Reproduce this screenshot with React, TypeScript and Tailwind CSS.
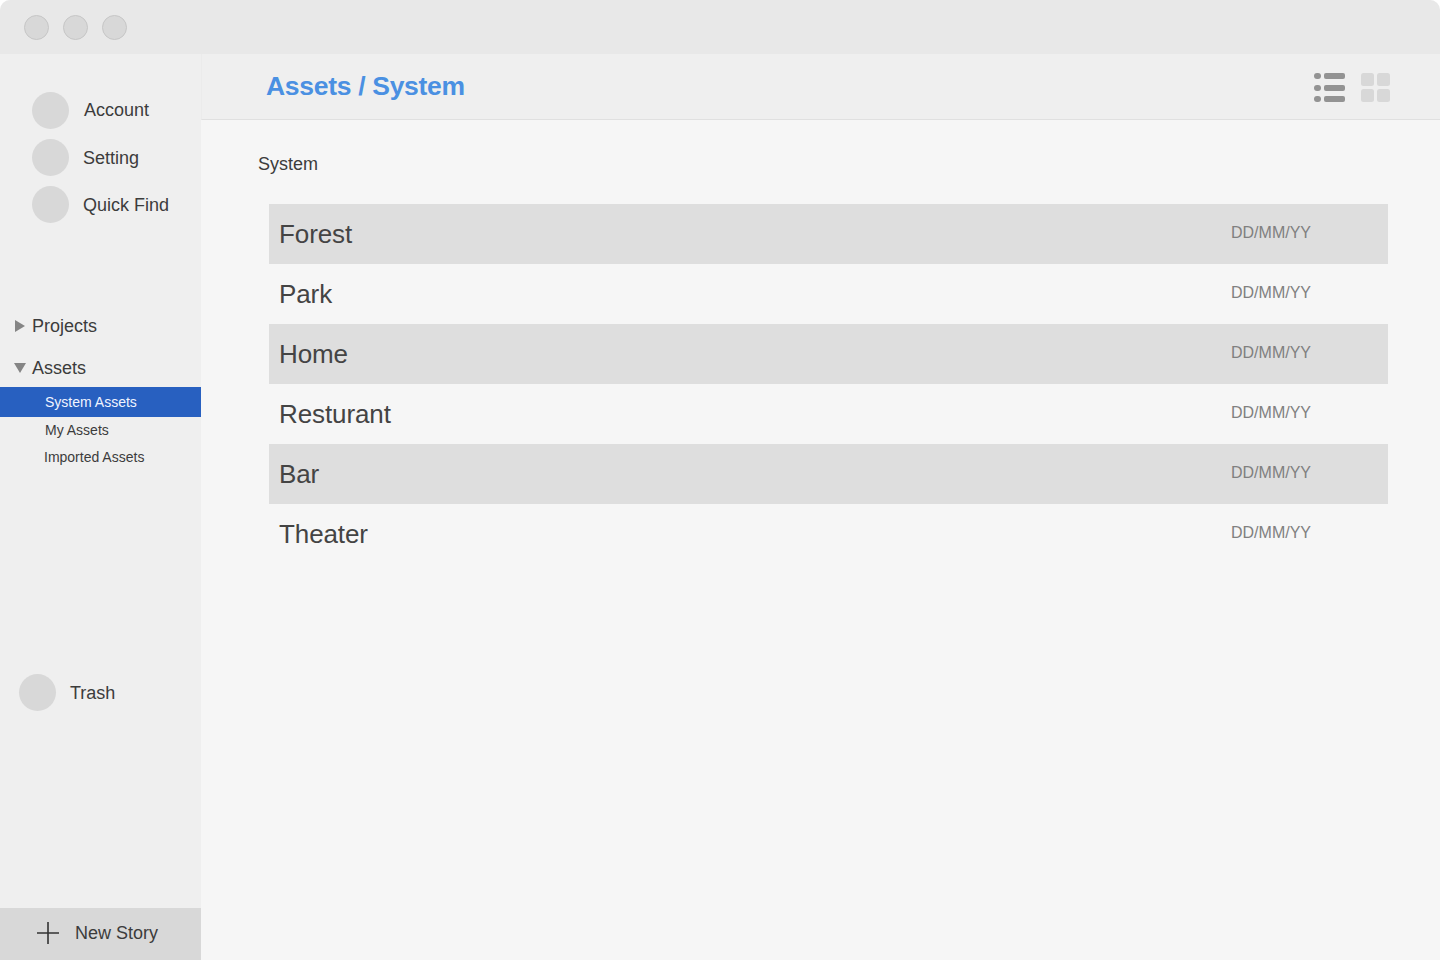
export default function App() {
  const rows = ["Forest", "Park", "Home", "Resturant", "Bar", "Theater"];
  return (
    <div className="w-[1440px] h-[960px] bg-white overflow-hidden font-['Liberation_Sans',Arial,sans-serif]">
      <div className="w-full h-full flex flex-col rounded-t-[10px] overflow-hidden bg-[#f6f6f6]">
        <div className="h-[54px] bg-[#e8e8e8] flex items-center pl-[24px] pt-[1px] gap-[14px] shrink-0">
          <div className="w-[25px] h-[25px] rounded-full bg-[#d8d8d8] border border-[#c6c6c6]" />
          <div className="w-[25px] h-[25px] rounded-full bg-[#d8d8d8] border border-[#c6c6c6]" />
          <div className="w-[25px] h-[25px] rounded-full bg-[#d8d8d8] border border-[#c6c6c6]" />
        </div>
        <div className="flex-1 flex min-h-0">
          <aside className="w-[201px] shrink-0 bg-[#efefef] flex flex-col text-[#3c3c3c]">
            <div className="pt-[38px] pl-[32px] flex flex-col gap-[10px] text-[18px] leading-[37px]">
              <div className="flex h-[37px]">
                <div className="w-[37px] h-[37px] rounded-full bg-[#d8d8d8]" />
                <span className="ml-[15px]">Account</span>
              </div>
              <div className="flex h-[37px]">
                <div className="w-[37px] h-[37px] rounded-full bg-[#d8d8d8]" />
                <span className="ml-[14px] mt-[1px]">Setting</span>
              </div>
              <div className="flex h-[37px]">
                <div className="w-[37px] h-[37px] rounded-full bg-[#d8d8d8]" />
                <span className="ml-[14px] mt-[1px]">Quick Find</span>
              </div>
            </div>
            <div className="mt-[90px] h-[26px] flex items-center text-[18px] pl-[15px]">
              <svg width="10" height="12" viewBox="0 0 10 12" className="mr-[7px]">
                <path d="M0 0L10 6L0 12Z" fill="#858585" />
              </svg>
              Projects
            </div>
            <div className="mt-[16px] h-[26px] flex items-center text-[18px] pl-[14px]">
              <svg width="12" height="10" viewBox="0 0 12 10" className="mr-[6px]">
                <path d="M0 0H12L6 10Z" fill="#858585" />
              </svg>
              Assets
            </div>
            <div className="mt-[6px] h-[30px] bg-[#2860c0] text-[#f0f4ff] text-[14px] leading-[30px] pl-[45px]">
              System Assets
            </div>
            <div className="mt-[1px] h-[25px] text-[14px] leading-[25px] pl-[45px]">My Assets</div>
            <div className="mt-[2px] h-[25px] text-[14px] leading-[25px] pl-[44px]">Imported Assets</div>
            <div className="mt-[204px] pl-[19px] flex h-[37px] text-[18px] leading-[37px]">
              <div className="w-[37px] h-[37px] rounded-full bg-[#d8d8d8]" />
              <span className="ml-[14px] mt-[1px]">Trash</span>
            </div>
            <div className="mt-auto h-[52px] bg-[#d8d8d8] flex items-center pl-[37px] text-[18px]">
              <svg width="22" height="22" viewBox="0 0 22 22" className="mr-[16px] mb-[2px]">
                <path d="M0 11H22M11 0V22" stroke="#333333" strokeWidth="1.6" />
              </svg>
              <span className="mb-[2px]">New Story</span>
            </div>
          </aside>
          <main className="flex-1 min-w-0 flex flex-col">
            <header className="h-[66px] shrink-0 bg-[#efefef] border-b border-l border-b-[#e0e0e0] border-l-[#ebebeb] flex items-center pl-[64px] pr-[50px]">
              <h1 className="text-[26.5px] font-bold text-[#4a90e2] tracking-[-0.3px] mt-[1px]">Assets / System</h1>
              <div className="ml-auto mt-[2px] flex items-center gap-[16px]">
                <svg width="31" height="29" viewBox="0 0 31 29">
                  <g fill="#939393">
                    <rect x="0" y="0" width="7" height="6" rx="3" />
                    <rect x="10" y="0" width="21" height="6" rx="2" />
                    <rect x="0" y="12" width="7" height="6" rx="3" />
                    <rect x="10" y="12" width="21" height="6" rx="2" />
                    <rect x="0" y="23" width="7" height="6" rx="3" />
                    <rect x="10" y="23" width="21" height="6" rx="2" />
                  </g>
                </svg>
                <svg width="29" height="29" viewBox="0 0 29 29">
                  <g fill="#d8d8d8">
                    <rect x="0" y="0" width="13" height="13" rx="2.5" />
                    <rect x="16" y="0" width="13" height="13" rx="2.5" />
                    <rect x="0" y="16" width="13" height="13" rx="2.5" />
                    <rect x="16" y="16" width="13" height="13" rx="2.5" />
                  </g>
                </svg>
              </div>
            </header>
            <div className="pl-[57px] pt-[31px] text-[18px] leading-[26px] text-[#3c3c3c]">System</div>
            <div className="mt-[27px] ml-[68px] w-[1119px] flex flex-col">
              {rows.map((r, i) => (
                <div key={r} className={`h-[60px] flex items-center pl-[10px] ${i % 2 === 0 ? "bg-[#dedede]" : ""}`}>
                  <span className="text-[26px] tracking-[-0.1px] text-[#444444]">{r}</span>
                  <span className="ml-auto mr-[77px] mb-[3px] text-[16px] text-[#808080]">DD/MM/YY</span>
                </div>
              ))}
            </div>
          </main>
        </div>
      </div>
    </div>
  );
}
